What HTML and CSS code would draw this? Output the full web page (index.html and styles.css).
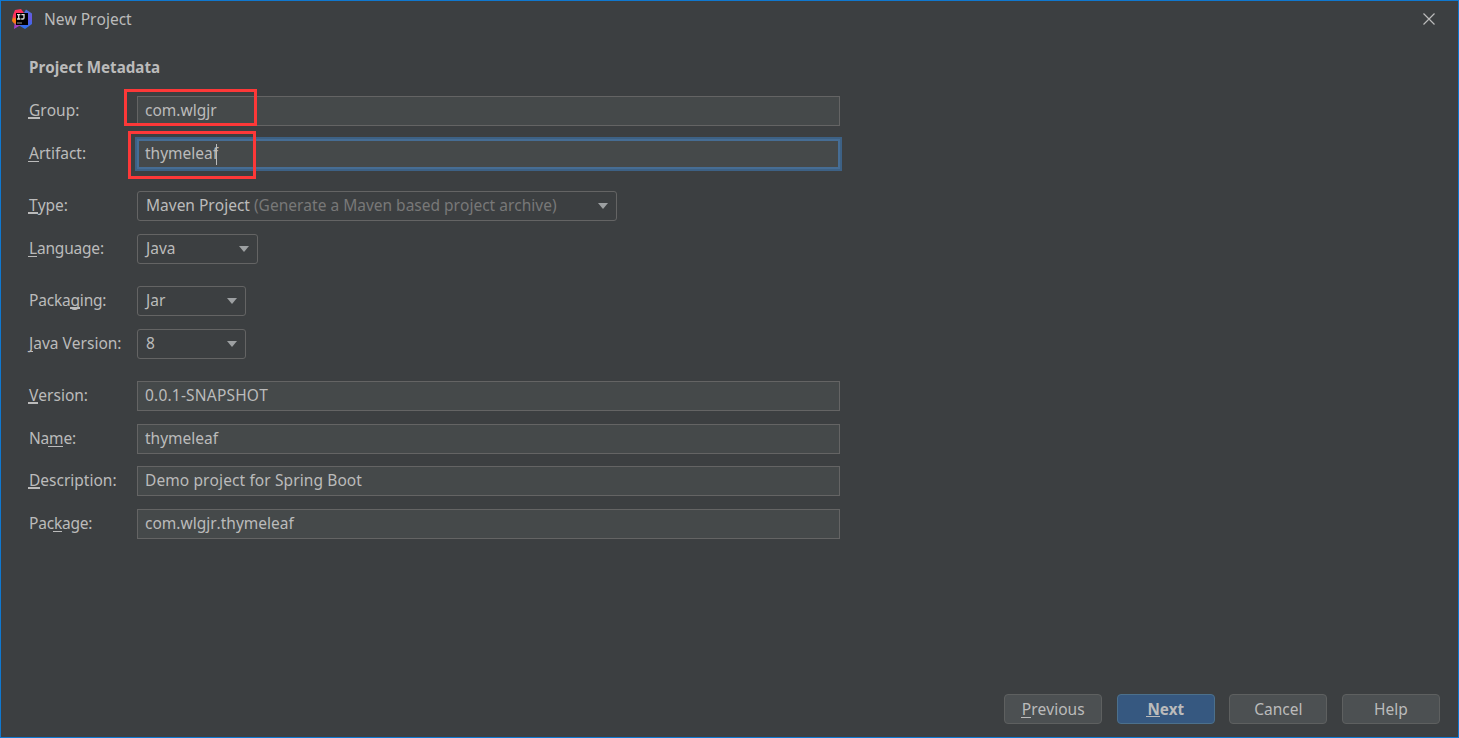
FILE: index.html
```html
<!DOCTYPE html>
<html lang="en">
<head>
    <meta charset="UTF-8">
    <meta name="viewport" content="width=device-width, initial-scale=1.0">
    <title>New Project</title>
    <link rel="stylesheet" href="styles.css">
</head>
<body>
    <div class="dialog">
        <div class="titlebar">
            <svg class="logo" width="20" height="20" viewBox="0 0 20 20">
                <defs>
                    <linearGradient id="warm" x1="0" y1="0" x2="0" y2="1">
                        <stop offset="0" stop-color="#fe315d"/>
                        <stop offset="0.4" stop-color="#fe315d"/>
                        <stop offset="0.5" stop-color="#f97a12"/>
                        <stop offset="0.68" stop-color="#f97a12"/>
                        <stop offset="0.8" stop-color="#a33cc0"/>
                        <stop offset="1" stop-color="#a33cd0"/>
                    </linearGradient>
                    <linearGradient id="cool" x1="0" y1="0" x2="0" y2="1">
                        <stop offset="0" stop-color="#3f72dc"/>
                        <stop offset="0.4" stop-color="#6b57e0"/>
                        <stop offset="1" stop-color="#2573ee"/>
                    </linearGradient>
                </defs>
                <path fill="url(#warm)" d="M3 1 L9 0 L12 4 L12 17 L7 17 L2 20 L2.500 15 L0 12 L1 6 Z"/>
                <path fill="url(#cool)" d="M14 0.500 L20 4.500 L20 15 L13 20 L8 17 L12 4 Z"/>
                <rect x="4" y="4" width="12" height="12" fill="#000"/>
                <path stroke="#ddd" stroke-width="1.300" fill="none" d="M5 5.600 H8.400 M6.700 5.600 V10 M5 10 H8.400 M9.400 5.600 H12 V8.800 Q12 10 10.800 10 H9.200"/>
                <path fill="#999" d="M5 13.500 H10 V14.500 H5 Z"/>
            </svg>
            <span class="window-title">New Project</span>
            <svg class="close" width="12" height="12" viewBox="0 0 12 12">
                <path d="M0.500 0.500 L11.500 11.500 M11.500 0.500 L0.500 11.500"/>
            </svg>
        </div>

        <div class="content">
            <h1 class="heading">Project Metadata</h1>

            <div class="row">
                <label class="label"><span class="key thick">G</span>roup:</label>
                <div class="field">com.wlgjr</div>
            </div>
            <div class="row">
                <label class="label"><span class="key">A</span>rtifact:</label>
                <div class="field focused">thymeleaf<span class="caret"></span></div>
            </div>
            <div class="row section">
                <label class="label"><span class="key thick">T</span>ype:</label>
                <div class="select wide"><span class="value">Maven Project <span class="hint">(Generate a Maven based project archive)</span></span><span class="arrow"></span></div>
            </div>
            <div class="row">
                <label class="label narrow"><span class="key">L</span>anguage:</label>
                <div class="select medium"><span class="value">Java</span><span class="arrow"></span></div>
            </div>
            <div class="row section">
                <label class="label narrow">Packa<span class="key thick">g</span>ing:</label>
                <div class="select small"><span class="value">Jar</span><span class="arrow"></span></div>
            </div>
            <div class="row">
                <label class="label"><span class="key">J</span>ava Version:</label>
                <div class="select small"><span class="value">8</span><span class="arrow"></span></div>
            </div>
            <div class="row section">
                <label class="label"><span class="key thick">V</span>ersion:</label>
                <div class="field snapshot">0.0.1-SNAPSHOT</div>
            </div>
            <div class="row">
                <label class="label narrow">Na<span class="key">m</span>e:</label>
                <div class="field">thymeleaf</div>
            </div>
            <div class="row tight">
                <label class="label"><span class="key thick">D</span>escription:</label>
                <div class="field spaced">Demo project for Spring Boot</div>
            </div>
            <div class="row">
                <label class="label narrow">Pac<span class="key">k</span>age:</label>
                <div class="field">com.wlgjr.thymeleaf</div>
            </div>
        </div>

        <div class="footer">
            <button class="btn"><span><span class="key">P</span>revious</span></button>
            <button class="btn primary"><span><span class="key">N</span>ext</span></button>
            <button class="btn">Cancel</button>
            <button class="btn">Help</button>
        </div>

        <div class="mark mark-group"></div>
        <div class="mark mark-artifact"></div>
    </div>
</body>
</html>
```
FILE: styles.css
```css
* {
    margin: 0;
    padding: 0;
    box-sizing: border-box;
}

body {
    font-family: "Noto Sans", "Open Sans", sans-serif;
    font-size: 15.5px;
    font-kerning: none;
    color: #bbbbbb;
    background: #3c3f41;
}

.dialog {
    position: relative;
    display: flex;
    flex-direction: column;
    width: 100%;
    height: 100vh;
    border: 1px solid #0f78d0;
    background: #3c3f41;
}

.titlebar {
    display: flex;
    align-items: center;
    height: 35px;
    padding: 0 23px 0 11px;
}

.window-title {
    flex: 1;
    margin-left: 12px;
}

.close {
    stroke: #bbbbbb;
    stroke-width: 1.2;
    fill: none;
}

.content {
    flex: 1;
    padding: 20px 0 0 28px;
}

.heading {
    height: 40px;
    font-size: 15.2px;
    font-weight: 700;
    line-height: 22px;
}

.row {
    display: flex;
    align-items: center;
    height: 30px;
    margin-bottom: 13px;
}

.row.section {
    margin-top: 22px;
}

.row.tight {
    margin-top: -1px;
}

.label {
    width: 108px;
    padding-bottom: 2px;
    line-height: 28px;
    white-space: nowrap;
}

.label.narrow {
    letter-spacing: -0.2px;
}

/* mnemonic letter, underlined just below the baseline */
.key {
    background: linear-gradient(#bbbbbb, #bbbbbb) no-repeat 0 calc(100% - 2px) / 100% 1px;
}

.key.thick {
    background-size: 100% 2px;
}

.key:first-child {
    margin-left: -1px;
    padding-left: 1px;
}

.field {
    width: 703px;
    height: 30px;
    padding-left: 7px;
    line-height: 27px;
    border: 1px solid #646464;
    background: #45494a;
    white-space: nowrap;
}

.field.snapshot {
    letter-spacing: 0.2px;
}

.field.spaced {
    letter-spacing: 0.1px;
}

.field.focused {
    border-color: #466d94;
    box-shadow: inset 0 0 0 1px #466d94, 0 0 0 2px #3d6185;
}

.caret {
    display: inline-block;
    width: 1px;
    height: 21px;
    margin-left: -2px;
    background: #bbbbbb;
    vertical-align: middle;
}

.select {
    display: flex;
    align-items: center;
    justify-content: space-between;
    height: 30px;
    padding: 0 8px;
    line-height: 26px;
    border: 1px solid #646464;
    border-radius: 3px;
    white-space: nowrap;
}

.select .value {
    padding-bottom: 2px;
}

.select.wide {
    width: 480px;
}

.select.medium {
    width: 121px;
}

.select.small {
    width: 109px;
}

.hint {
    color: #787878;
}

.arrow {
    border: 5.5px solid transparent;
    border-top: 6px solid #9da0a2;
    border-bottom: 0;
}

.footer {
    display: flex;
    justify-content: flex-end;
    gap: 14.6px;
    padding: 0 18px 13px 0;
}

.btn {
    width: 98px;
    height: 30px;
    font-family: inherit;
    font-size: 15.5px;
    font-kerning: none;
    line-height: 27px;
    color: #bbbbbb;
    border: 1px solid #5e6060;
    border-radius: 4px;
    background: #4c5052;
}

.btn.primary {
    font-size: 15.2px;
    font-weight: 700;
    border-color: #4c708c;
    background: #365880;
}

/* red highlight frames over the form */
.mark {
    position: absolute;
    border: 3px solid #fd3838;
}

.mark-group {
    left: 123px;
    top: 88px;
    width: 133px;
    height: 37px;
}

.mark-artifact {
    left: 127px;
    top: 130px;
    width: 128px;
    height: 48px;
}
```
